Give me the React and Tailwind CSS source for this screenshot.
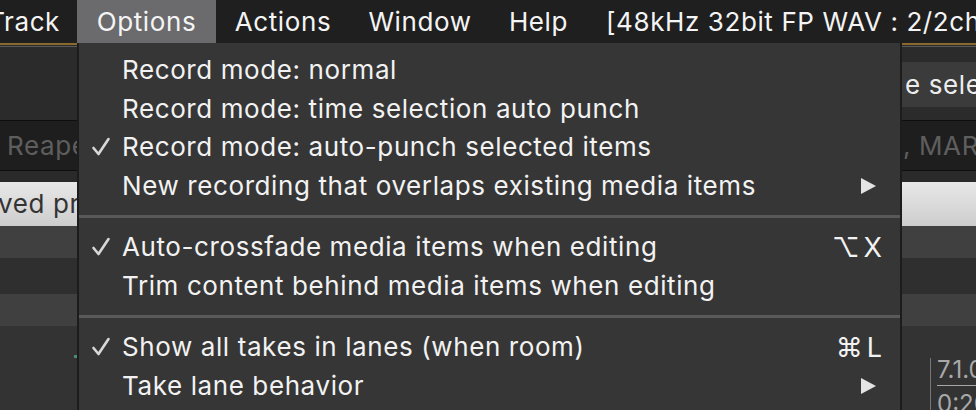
import React from 'react';

const menuBar = [
  { label: 'Options', w: 'w-[139px]', active: true },
  { label: 'Actions', w: 'w-[134px]' },
  { label: 'Window', w: 'w-[140px]' },
  { label: 'Help', w: 'w-[97px]' },
];

const Arrow = () => (
  <svg width="17" height="18" viewBox="0 0 17 18" className="fill-[#e4e4e4]">
    <path d="M1 1 L16 9 L1 17 Z" />
  </svg>
);

const Check = () => (
  <svg width="20" height="20" viewBox="0 0 20 20" className="fill-none stroke-[#d8d8d8]">
    <path d="M2.5 11 L7.5 17 L17.5 2" strokeWidth="2.6" strokeLinecap="round" strokeLinejoin="round" />
  </svg>
);

const groups = [
  [
    { label: 'Record mode: normal' },
    { label: 'Record mode: time selection auto punch' },
    { label: 'Record mode: auto-punch selected items', checked: true },
    { label: 'New recording that overlaps existing media items', submenu: true },
  ],
  [
    { label: 'Auto-crossfade media items when editing', checked: true, shortcut: '⌥X' },
    { label: 'Trim content behind media items when editing' },
  ],
  [
    { label: 'Show all takes in lanes (when room)', checked: true, shortcut: '⌘L' },
    { label: 'Take lane behavior', submenu: true },
  ],
];

const MenuRow = ({ item }) => (
  <div className="flex h-[38.5px] items-center pl-[12px] pr-[18px] text-[26px] tracking-[0.6px] text-[#f2f2f2]">
    <span className="flex w-[31px] items-center">{item.checked && <Check />}</span>
    <span className="flex-1 whitespace-nowrap">{item.label}</span>
    {item.shortcut && <span className="-mr-[4px] text-[27px] tracking-[4px]">{item.shortcut}</span>}
    {item.submenu && (
      <span className="pr-[5px]">
        <Arrow />
      </span>
    )}
  </div>
);

export default function App() {
  return (
    <div className="relative h-[410px] w-[976px] overflow-hidden bg-[#333333] font-['Inter','Noto_Sans',sans-serif] leading-none">
      {/* top menu bar */}
      <div className="flex h-[43px] items-center bg-[#1f1f1f] text-[26px] tracking-[0.6px] text-[#f4f4f4]">
        <div className="flex h-full w-[77px] shrink-0 items-center justify-end overflow-hidden pr-[17px]">
          <span className="whitespace-nowrap">Track</span>
        </div>
        {menuBar.map((m) => (
          <div
            key={m.label}
            className={`flex h-full shrink-0 items-center justify-center ${m.w} ${m.active ? 'bg-[#6b6b6d]' : ''}`}
          >
            {m.label}
          </div>
        ))}
        <div className="shrink-0 whitespace-nowrap pl-[19px]">[48kHz 32bit FP WAV : 2/2ch]</div>
      </div>

      {/* background window */}
      <div className="h-[2px] bg-[#8a6a2c]" />
      <div className="h-[1px] bg-[#2a2a2a]" />
      <div className="h-[1px] bg-[#5a5a5a]" />
      <div className="flex h-[73px] justify-end bg-[#2b2b2b] pt-[15px]">
        <div className="flex h-[45px] w-[74px] items-center overflow-hidden bg-[#3b3b3b] pl-[3px] text-[26px] tracking-[0.6px] text-[#ededed]">
          <span className="whitespace-nowrap">e selected</span>
        </div>
      </div>
      <div className="h-[1px] bg-[#0e0e0e]" />
      <div className="flex h-[49px] items-center justify-between bg-[#1e1e1e] text-[26px] tracking-[0.6px] text-[#5e5e5e]">
        <span className="pl-[7px]">Reaper</span>
        <span className="w-[74px] overflow-hidden whitespace-nowrap pl-[1px]">, MARTIN</span>
      </div>
      <div className="h-[1px] bg-[#0e0e0e]" />
      <div className="h-[11px] bg-[#2a2a2a]" />
      <div className="flex h-[44px] items-center overflow-hidden bg-gradient-to-b from-[#e8e8e8] to-[#cdcdcd] text-[26px] tracking-[0.6px] text-[#333]">
        <span className="-ml-[2px] whitespace-nowrap">ved project</span>
      </div>
      <div className="h-[32px] bg-[#404040]" />
      <div className="h-[36px] bg-[#2f2f2f]" />
      <div className="h-[32px] bg-[#404040]" />
      <div className="flex justify-end pt-[32px]">
        <div className="relative w-[46px]">
          <div className="absolute left-[0px] top-0 h-[60px] w-[1px] bg-[#777]" />
          <div className="pl-[7px] text-[24px] text-[#a8a8a8]">
            <div className="whitespace-nowrap border-b border-[#a8a8a8] pb-[3px]">7.1.00</div>
            <div className="whitespace-nowrap pt-[6px]">0:20</div>
          </div>
        </div>
      </div>
      <div className="absolute left-[74px] top-[355px] h-[3px] w-[3px] bg-[#4c8a7a]" />

      {/* dropdown */}
      <div className="absolute bottom-0 left-[77px] top-[43px] w-[825px] border-x-2 border-[#1c1c1c] bg-[#363636] pt-[8px]">
        {groups.map((g, gi) => (
          <div key={gi}>
            {gi > 0 && <div className="my-[10px] h-[3px] bg-[#595959]" />}
            {g.map((item) => (
              <MenuRow key={item.label} item={item} />
            ))}
          </div>
        ))}
      </div>
    </div>
  );
}
